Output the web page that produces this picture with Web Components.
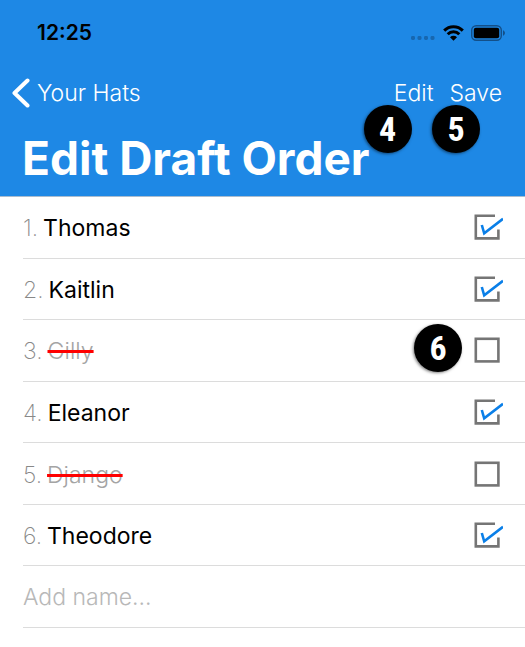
<!DOCTYPE html>
<html lang="en">
<head>
<meta charset="utf-8">
<meta name="viewport" content="width=device-width, initial-scale=1">
<title>Edit Draft Order</title>
<style>
  body {
    margin: 0;
    background: #fff;
    font-family: Inter, "Liberation Sans", sans-serif;
    font-size: 23px;
    line-height: 30px;
  }
</style>
</head>
<body>
<draft-order></draft-order>

<script>
class StepBadge extends HTMLElement {
  constructor() {
    super();
    this.attachShadow({ mode: "open" });
    this.shadowRoot.innerHTML = `
      <style>
        :host {
          display: flex;
          align-items: center;
          justify-content: center;
          width: 48px;
          height: 48px;
          border-radius: 50%;
          background: #000;
          color: #fff;
          box-shadow: -1px 1px 3px rgba(0,0,0,0.5);
          font: bold 34px/48px "Roboto Condensed", Roboto, sans-serif;
        }
      </style>
      <slot></slot>
    `;
  }
}
customElements.define("step-badge", StepBadge);

class StatusBar extends HTMLElement {
  constructor() {
    super();
    this.attachShadow({ mode: "open" });
    this.shadowRoot.innerHTML = `
      <style>
        :host {
          display: flex;
          align-items: center;
          justify-content: space-between;
          height: 65px;
          padding: 0 20px 0 37px;
          color: #000;
          font-size: 21px;
          font-weight: 600;
        }
        #icons {
          display: flex;
          align-items: center;
          gap: 7px;
        }
        svg {
          display: block;
        }
      </style>
      <time><slot></slot></time>
      <div id="icons">
        <svg width="25" height="16" viewBox="0 0 25 16" fill="#1767b0" aria-hidden="true">
          <rect x="0" y="11" width="4" height="4" rx="1.4"/>
          <rect x="6.5" y="11" width="4" height="4" rx="1.4"/>
          <rect x="13" y="11" width="4" height="4" rx="1.4"/>
          <rect x="19.5" y="11" width="4" height="4" rx="1.4"/>
        </svg>
        <svg width="21" height="16" viewBox="0 0 21 16" aria-hidden="true">
          <path d="M1.2 5.6a13.2 13.2 0 0 1 18.6 0M4.7 9.2a8.2 8.2 0 0 1 11.6 0" fill="none" stroke="#000" stroke-width="3"/>
          <path d="M7 12.2a5 5 0 0 1 7 0L10.5 15.8z"/>
        </svg>
        <svg width="34" height="16" viewBox="0 0 34 16" aria-hidden="true">
          <rect x=".7" y=".7" width="29.6" height="14.6" rx="4.5" fill="none" stroke="#134f88" stroke-width="1.4"/>
          <rect x="2.8" y="2.8" width="25.4" height="10.4" rx="2"/>
          <path d="M32 5.3c2.6 1 2.6 4.4 0 5.4z" fill="#134f88"/>
        </svg>
      </div>
    `;
  }
}
customElements.define("status-bar", StatusBar);

class NavBar extends HTMLElement {
  constructor() {
    super();
    this.attachShadow({ mode: "open" });
    this.shadowRoot.innerHTML = `
      <style>
        :host {
          display: block;
          background: #1e88e5;
          color: #fff;
          border-bottom: 1px solid #a9bccf;
        }
        nav {
          display: flex;
          align-items: center;
          justify-content: space-between;
          height: 56px;
          padding: 0 23px 0 12px;
          font-weight: 300;
        }
        a {
          display: flex;
          align-items: center;
          gap: 7px;
          color: inherit;
          text-decoration: none;
        }
        #actions {
          display: flex;
          gap: 16px;
        }
        ::slotted(h1) {
          margin: 0;
          padding: 10px 22px;
          font-size: 46px;
          line-height: 55px;
          font-weight: 700;
        }
      </style>
      <slot name="status"></slot>
      <nav>
        <a href="#hats">
          <svg width="18" height="30" viewBox="0 0 18 30" fill="none" stroke="#fff" stroke-width="4" stroke-linecap="round" stroke-linejoin="round" aria-hidden="true">
            <path d="M15.5 2.5L2.5 15L15.5 27.5"/>
          </svg>
          <slot name="back"></slot>
        </a>
        <div id="actions"><slot name="action"></slot></div>
      </nav>
      <slot name="title"></slot>
    `;
  }
}
customElements.define("nav-bar", NavBar);

class NavAction extends HTMLElement {
  constructor() {
    super();
    this.attachShadow({ mode: "open" });
    this.shadowRoot.innerHTML = `
      <style>
        :host {
          display: block;
          position: relative;
        }
        button {
          display: block;
          padding: 0;
          border: 0;
          background: none;
          color: inherit;
          font: inherit;
          cursor: pointer;
        }
        ::slotted(step-badge) {
          position: absolute;
          top: 27px;
          right: 22px;
        }
      </style>
      <button type="button"><slot></slot></button>
      <slot name="badge"></slot>
    `;
  }
}
customElements.define("nav-action", NavAction);

class HatName extends HTMLElement {
  constructor() {
    super();
    this.attachShadow({ mode: "open" });
    this.shadowRoot.innerHTML = `
      <style>
        :host {
          position: relative;
          display: flex;
          align-items: center;
          gap: 5px;
          padding-right: 22px;
        }
        #number,
        label {
          padding-top: 2px;
        }
        #number {
          color: #888;
          font-weight: 200;
        }
        label {
          flex: 1;
          color: #000;
        }
        :host(:not([checked])) label {
          color: #a4a4a4;
          font-weight: 300;
        }
        :host(:not([checked])) label span {
          text-decoration: line-through #f00 3px;
          text-decoration-skip-ink: none;
        }
        #box {
          display: grid;
        }
        #box > * {
          grid-area: 1 / 1;
          width: 30px;
          height: 26px;
          margin: 0;
        }
        input {
          opacity: 0;
          cursor: pointer;
        }
        svg {
          fill: none;
          stroke: #757575;
          stroke-width: 2.6;
        }
        .tick {
          stroke: #0a7fe8;
        }
        :host([checked]) .off,
        :host(:not([checked])) .on {
          display: none;
        }
        ::slotted(step-badge) {
          position: absolute;
          top: 4px;
          right: 63px;
        }
      </style>
      <span id="number"></span>
      <label for="check"><span><slot></slot></span></label>
      <div id="box">
        <svg viewBox="0 0 30 26" aria-hidden="true">
          <rect class="off" x="2.8" y="1.8" width="22.6" height="22.6"/>
          <path class="on" d="M22 1.8H2.8V24.4H25.4V15.500"/>
          <path class="on tick" d="M8.8 11L11.2 19.3L30 4.8"/>
        </svg>
        <input type="checkbox" id="check">
      </div>
      <slot name="badge"></slot>
    `;
    this._check = this.shadowRoot.getElementById("check");
    this._check.addEventListener("change", this._toggle.bind(this));
  }
  connectedCallback() {
    this.shadowRoot.getElementById("number").textContent =
      this.getAttribute("number") + ".";
  }
  attributeChangedCallback() {
    this._check.checked = this.hasAttribute("checked");
  }
  static get observedAttributes() {
    return ["checked"];
  }
  _toggle() {
    this.toggleAttribute("checked", this._check.checked);
  }
}
customElements.define("hat-name", HatName);

class AddName extends HTMLElement {
  constructor() {
    super();
    this.attachShadow({ mode: "open" });
    this.shadowRoot.innerHTML = `
      <style>
        :host {
          display: flex;
          align-items: center;
        }
        input {
          flex: 1;
          min-width: 0;
          padding: 0;
          border: 0;
          outline: 0;
          background: none;
          color: #000;
          font: inherit;
        }
        input::placeholder {
          color: #b8b8b8;
          font-weight: 300;
          opacity: 1;
        }
      </style>
      <input type="text" placeholder="Add name..." aria-label="Add name">
    `;
  }
}
customElements.define("add-name", AddName);

class DraftOrder extends HTMLElement {
  constructor() {
    super();
    this.attachShadow({ mode: "open" });
    this.shadowRoot.innerHTML = `
      <style>
        :host {
          display: flex;
          flex-direction: column;
          min-height: 100vh;
        }
        main {
          flex: 1;
          display: grid;
          grid-auto-rows: 1fr;
          padding: 0 0 19px 23px;
        }
        main > * {
          min-height: 54px;
          border-bottom: 1px solid #dcdcdc;
        }
      </style>
      <nav-bar>
        <status-bar slot="status">12:25</status-bar>
        <span slot="back">Your Hats</span>
        <nav-action slot="action">Edit<step-badge slot="badge">4</step-badge></nav-action>
        <nav-action slot="action">Save<step-badge slot="badge">5</step-badge></nav-action>
        <h1 slot="title">Edit Draft Order</h1>
      </nav-bar>
      <main>
        <hat-name number="1" checked>Thomas</hat-name>
        <hat-name number="2" checked>Kaitlin</hat-name>
        <hat-name number="3">Gilly<step-badge slot="badge">6</step-badge></hat-name>
        <hat-name number="4" checked>Eleanor</hat-name>
        <hat-name number="5">Django</hat-name>
        <hat-name number="6" checked>Theodore</hat-name>
        <add-name></add-name>
      </main>
    `;
  }
}
customElements.define("draft-order", DraftOrder);
</script>
</body>
</html>
